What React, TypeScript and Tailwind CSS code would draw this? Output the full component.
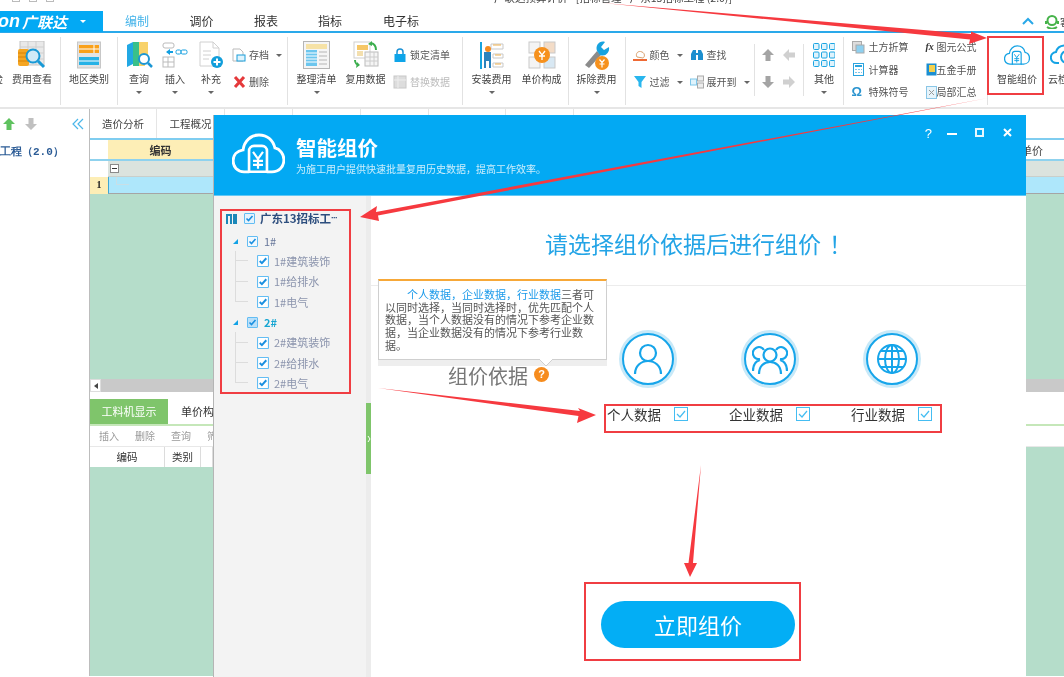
import React from "react";

const Svg = ({ w, h, children }: { w: number; h: number; children: React.ReactNode }) => (
  <svg width={w} height={h} viewBox={`0 0 ${w} ${h}`} fill="none" className="shrink-0">
    {children}
  </svg>
);

const FeeIcon = () => (
  <Svg w={28} h={28}>
    <rect x="2" y="0" width="24" height="24" fill="#e9e9e9" stroke="#c4c4c4" />
    <path d="M2 6h24M2 12h24M2 18h24M10 0v24M18 0v24" stroke="#cfcfcf" />
    <rect x="0" y="8" width="11" height="17" rx="2" fill="#f5a623" />
    <path d="M0 12h11M0 16h11M0 20h11" stroke="#d98207" />
    <circle cx="15" cy="15" r="6.5" fill="#cfeaf7" stroke="#1899d6" strokeWidth="2" />
    <path d="M20 20l6 6" stroke="#1899d6" strokeWidth="3" />
  </Svg>
);
const RegionIcon = () => (
  <Svg w={24} h={28}>
    <rect x="0.5" y="1" width="23" height="26" fill="#e3e3e3" stroke="#c7c7c7" />
    <rect x="2" y="4" width="20" height="8" fill="#f9a11b" />
    <rect x="2" y="16" width="20" height="8" fill="#27b2e6" />
    <path d="M17 4v8M2 8h20M2 20h20" stroke="#fff" />
  </Svg>
);
const QueryIcon = () => (
  <Svg w={27} h={28}>
    <path d="M1 4l6-3v22l-6 3z" fill="#22a8e4" />
    <path d="M7 1h6v24H7z" fill="#39c08a" />
    <path d="M13 1h9v15l-4 3 1 6h-6z" fill="#f8d26a" />
    <circle cx="18" cy="18" r="5" fill="#fff" stroke="#1b96d4" strokeWidth="2" />
    <path d="M22 22l4 4" stroke="#1b96d4" strokeWidth="2.5" />
  </Svg>
);
const InsertIcon = () => (
  <Svg w={26} h={28}>
    <rect x="1" y="2" width="11" height="5" rx="2" stroke="#bbb" />
    <rect x="1" y="16" width="11" height="10" stroke="#bbb" />
    <path d="M1 21h11M6 16v10" stroke="#bbb" />
    <path d="M5 11h6" stroke="#139fe0" strokeWidth="2" />
    <path d="M8 8v6l-4-3z" fill="#139fe0" />
    <rect x="14" y="9" width="5" height="4" rx="1.5" stroke="#139fe0" />
    <rect x="19" y="9" width="6" height="4" rx="1.5" stroke="#139fe0" />
  </Svg>
);
const AddIcon = () => (
  <Svg w={24} h={28}>
    <path d="M1 1h13l6 6v18H1z" fill="#fff" stroke="#d0d0d0" />
    <path d="M14 1v6h6M4 10h8M4 14h8M4 18h6" stroke="#d0d0d0" />
    <circle cx="18" cy="21" r="6" fill="#119edb" />
    <path d="M14.5 21h7M18 17.5v7" stroke="#fff" strokeWidth="2" />
  </Svg>
);
const TableIcon = () => (
  <Svg w={27} h={28}>
    <rect x="0.5" y="0.5" width="26" height="27" fill="#f5f5f5" stroke="#b5b5b5" strokeWidth="1" />
    <rect x="3" y="3" width="21" height="5" fill="#f6e2a6" />
    <rect x="3" y="9" width="11" height="16" fill="#6cc6ee" />
    <path d="M3 12h11M3 15h11M3 18h11M3 21h11" stroke="#fff" />
    <path d="M16 11h8M16 15h8M16 19h8M16 23h8" stroke="#d5d5d5" strokeWidth="2" />
  </Svg>
);
const ReuseIcon = () => (
  <Svg w={26} h={28}>
    <rect x="1" y="1" width="16" height="16" fill="#fff" stroke="#cfcfcf" />
    <rect x="4" y="4" width="11" height="5" fill="#f6c766" />
    <rect x="4" y="10" width="6" height="5" fill="#f3dfae" />
    <rect x="12" y="11" width="13" height="14" fill="#f5f5f5" stroke="#bbb" />
    <path d="M12 16h13M12 20h13M17 11v14M21 11v14" stroke="#ccc" />
    <path d="M18 2c4 1 5 4 5 7" stroke="#3cae4e" strokeWidth="2" />
    <path d="M19 0l-4 3 4 2zM3 27l4-3-3-3z" fill="#3cae4e" />
    <path d="M2 19c0 3 2 5 4 5" stroke="#3cae4e" strokeWidth="2" />
  </Svg>
);
const InstallIcon = () => (
  <Svg w={25} h={28}>
    <path d="M2 1v27" stroke="#17a4df" strokeWidth="2" />
    <path d="M12 3h12v5H12zM14 13h10v4H14zM14 22h10v4H14z" stroke="#c9c9c9" />
    <path d="M14 4h8M16 14h6M16 23h6" stroke="#f0b04a" />
    <circle cx="9" cy="8" r="3" fill="#f58a1f" />
    <rect x="5" y="11" width="7" height="9" fill="#2c83bd" />
    <path d="M6 20v7M11 20v7" stroke="#2c83bd" strokeWidth="2" />
  </Svg>
);
const UnitIcon = () => (
  <Svg w={28} h={28}>
    <rect x="1" y="1" width="11" height="11" stroke="#c9c9c9" fill="#f4f4f4" />
    <rect x="16" y="1" width="11" height="11" stroke="#c9c9c9" fill="#f3dcc7" />
    <rect x="1" y="16" width="11" height="11" stroke="#c9c9c9" fill="#f4f4f4" />
    <rect x="16" y="16" width="11" height="11" stroke="#c9c9c9" fill="#d8e8f3" />
    <circle cx="14" cy="14" r="8" fill="#f6911d" />
    <path d="M11 10l3 4 3-4M14 14v5M11 15h6" stroke="#fff" strokeWidth="1.3" />
  </Svg>
);
const WrenchIcon = () => (
  <Svg w={28} h={30}>
    <path d="M2 25L14 11l4 4L6 28z" fill="#8b8b8b" />
    <path d="M14 11c-2-6 3-11 8-9l-4 5 3 3 5-3c1 6-4 10-9 8z" fill="#17a3df" />
    <circle cx="19" cy="23" r="7" fill="#f6911d" />
    <path d="M16.5 19.5l2.5 3 2.500-3M19 22.500v5M16.500 24h5" stroke="#fff" strokeWidth="1.2" />
  </Svg>
);
const GridIcon = () => (
  <Svg w={22} h={24}>
    {[0, 8.5, 17].map((y) =>
      [0, 8, 16].map((x) => (
        <rect key={`${x}-${y}`} x={x + 0.5} y={y + 0.5} width="5.500" height="6" rx="1" stroke="#1ba5e3" fill="#dff3fc" />
      ))
    )}
  </Svg>
);
const CloudY = ({ s = 26, c = "#15a3e4", sw = 2 }: { s?: number; c?: string; sw?: number }) => (
  <svg width={s} height={s * 0.77} viewBox="0 0 53 41" fill="none" className="shrink-0">
    <path
      d="M17 39H12C5 39 1 34 1 28c0-6 4-10 10-11C12 8 19 2 27 2c8 0 14 5 16 13 5 1 9 6 9 12 0 7-5 12-12 12h-5"
      stroke={c}
      strokeWidth={sw * 1.3}
      strokeLinecap="round"
    />
    <path d="M17 39V18c0-3 2-5 5-5h8c3 0 5 2 5 5v21z" stroke={c} strokeWidth={sw * 1.2} />
    <path d="M21 19l5 7 5-7M26 26v10M21 28h10M21 32h10" stroke={c} strokeWidth={sw} />
  </svg>
);

const Caret = () => <span className="block w-0 h-0 border-x-[3px] border-x-transparent border-t-[3px] border-t-[#666]" />;

const Large = ({ w, label, icon, caret, cls = "" }: { w: number; label: string; icon: React.ReactNode; caret?: boolean; cls?: string }) => (
  <div className={`flex flex-col items-center shrink-0 pt-[4px] ${cls}`} style={{ width: w }}>
    <div className="h-[28px] flex items-center justify-center">{icon}</div>
    <div className="mt-[3px] text-[10px] leading-[14px] text-[#444] whitespace-nowrap">{label}</div>
    {caret && <div className="mt-[5px]"><Caret /></div>}
  </div>
);

const Small = ({ icon, label, caret, faded, w }: { icon: React.ReactNode; label: string; caret?: boolean; faded?: boolean; w: number }) => (
  <div className="flex items-center h-[14px]" style={{ width: w }}>
    <div className="w-[17px] flex justify-start shrink-0">{icon}</div>
    <span className={`text-[10px] leading-[14px] whitespace-nowrap ${faded ? "text-[#bbb]" : "text-[#555]"}`}>{label}</span>
    {caret && <span className="ml-[7px]"><Caret /></span>}
  </div>
);

const Group = ({ w, children }: { w: number; children: React.ReactNode }) => (
  <div className="relative flex shrink-0 h-[68px] mt-[4px] border-r border-[#e2e2e2]" style={{ width: w }}>
    {children}
  </div>
);

const Col2 = ({ children, cls = "" }: { children: React.ReactNode; cls?: string }) => (
  <div className={`flex flex-col gap-[13px] pt-[11px] shrink-0 ${cls}`}>{children}</div>
);

const Arrow = ({ d, c }: { d: string; c: string }) => (
  <Svg w={14} h={14}>
    <path d={d} fill={c} />
  </Svg>
);
const UP = "M7 1l6 6H9.500v6h-5V7H1z";
const DOWN = "M7 13l6-6H9.500V1h-5v6H1z";
const LEFT = "M1 7l6-6v3.500h6v5H7V13z";
const RIGHT = "M13 7L7 1v3.500H1v5h6V13z";

const Check = ({ size = 11, fill = "#fff", border = "#63bdf3", check = "#1a8fe0", sw = 1.6 }: { size?: number; fill?: string; border?: string; check?: string; sw?: number }) => (
  <svg width={size} height={size} viewBox="0 0 11 11" className="shrink-0">
    <rect x="0.500" y="0.500" width="10" height="10" rx="0.500" fill={fill} stroke={border} />
    <path d="M2.500 5.500l2 2 4-4.500" fill="none" stroke={check} strokeWidth={sw} />
  </svg>
);

const Child = ({ label, last }: { label: string; last?: boolean }) => (
  <div className="flex h-[20.300px] ml-[21px]">
    <div className="w-[13px] shrink-0 flex flex-col">
      <div className="h-1/2 border-l border-b border-[#dcdcdc]" />
      <div className={`h-1/2 ${last ? "" : "border-l border-[#dcdcdc]"}`} />
    </div>
    <div className="ml-[9px] flex items-center">
      <Check size={12} sw={1.8} />
      <span className="ml-[5px] text-[11px] text-[#8b94ad] whitespace-nowrap">{label}</span>
    </div>
  </div>
);

const Tri = () => <span className="block w-0 h-0 border-l-[5px] border-l-transparent border-b-[5px] border-b-[#12a2e6]" />;

const Ring = ({ children }: { children: React.ReactNode }) => (
  <div className="w-[58px] h-[58px] rounded-full bg-[#c8e9f8] flex items-center justify-center">
    <div className="w-[52px] h-[52px] rounded-full bg-white border-2 border-[#16a5ea] flex items-center justify-center">{children}</div>
  </div>
);

const Data = ({ label }: { label: string }) => (
  <div className="w-[122px] flex items-center shrink-0">
    <span className="w-[54px] text-[13.500px] leading-[20px] text-[#333] whitespace-nowrap">{label}</span>
    <span className="ml-[13px] flex">
      <svg width="14" height="14" viewBox="0 0 14 14">
        <rect x="0.500" y="0.500" width="13" height="13" fill="#fff" stroke="#45bdf2" />
        <path d="M3 7l3 3 5-6" fill="none" stroke="#45bdf2" strokeWidth="1.200" />
      </svg>
    </span>
  </div>
);

function Row3({ icon, label, x }: { icon: React.ReactNode; label: string; x?: boolean }) {
  return (
    <div className="flex items-center h-[14px]">
      <div className={`${x ? "w-[11px]" : "w-[17px]"} shrink-0 flex`}>{icon}</div>
      <span className="text-[10px] leading-[14px] text-[#555] whitespace-nowrap">{label}</span>
    </div>
  );
}

export default function App() {
  return (
    <div className="relative w-[1064px] h-[677px] overflow-hidden bg-white blur-[0.35px]" style={{ fontFamily: '"Noto Sans CJK SC","Liberation Sans",sans-serif' }}>
      {/* title strip */}
      <div className="h-[11px] overflow-hidden flex">
        <div className="flex gap-[9px] pl-[12px] -mt-[6px]">
          <span className="block w-[8px] h-[8px] border border-[#bbb]" />
          <span className="block w-[8px] h-[8px] border border-[#bbb]" />
          <span className="block w-[8px] h-[8px] border border-[#bbb]" />
        </div>
        <div className="ml-[440px] -mt-[9px] text-[10.500px] leading-[14px] text-[#444] whitespace-nowrap">广联达预算计价 - [招标管理 - 广东13招标工程 (2.0)]</div>
      </div>

      {/* tab strip */}
      <div className="flex h-[22px] border-b-2 border-[#2aa9ea]">
        <div className="w-[103px] h-[21px] bg-[#03a9f4] flex items-center text-white overflow-hidden shrink-0">
          <span className="-ml-[6px] w-[26px] shrink-0 text-right italic font-bold text-[18px] leading-[21px] font-['Liberation_Sans']">on</span>
          <span className="ml-[2px] italic font-bold text-[15px] leading-[21px] whitespace-nowrap">广联达</span>
          <span className="ml-[13px] w-0 h-0 border-x-[3.500px] border-x-transparent border-t-[3.500px] border-t-white" />
        </div>
        <div className="ml-[2px] w-[64px] text-center text-[12px] leading-[20px] text-[#45b4ea]">编制</div>
        <div className="w-[65px] text-center text-[12px] leading-[20px] text-[#333]">调价</div>
        <div className="w-[64px] text-center text-[12px] leading-[20px] text-[#333]">报表</div>
        <div className="w-[64px] text-center text-[12px] leading-[20px] text-[#333]">指标</div>
        <div className="w-[78px] text-center text-[12px] leading-[20px] text-[#333]">电子标</div>
        <div className="ml-auto flex items-center">
          <svg width="12" height="8" viewBox="0 0 12 8"><path d="M1 7l5-5 5 5" fill="none" stroke="#29a8e8" strokeWidth="2" /></svg>
          <svg className="ml-[11px]" width="14" height="15" viewBox="0 0 14 15" fill="none">
            <circle cx="7" cy="6.500" r="4.500" stroke="#46b34a" strokeWidth="2" />
            <path d="M1 7v3M13 7v3M2 13c3 2 7 2 10 0" stroke="#46b34a" strokeWidth="2" />
          </svg>
          <span className="ml-[1px] w-[4px] overflow-hidden text-[10px] text-[#444]">客</span>
        </div>
      </div>

      {/* ribbon */}
      <div className="flex h-[76px] border-b-2 border-[#e6e6e6] bg-white overflow-hidden">
        <Group w={61}>
          <div className="w-[12px] flex justify-start pt-[35px] text-[10px] leading-[14px] text-[#444] shrink-0">
            <span className="block w-[3px] h-[14px] overflow-hidden" dir="rtl">检</span>
          </div>
          <Large w={40} label="费用查看" icon={<FeeIcon />} />
        </Group>
        <Group w={57}>
          <Large w={56} label="地区类别" icon={<RegionIcon />} />
        </Group>
        <Group w={170}>
          <Large w={36} cls="ml-[3px]" label="查询" icon={<QueryIcon />} caret />
          <Large w={36} label="插入" icon={<InsertIcon />} caret />
          <Large w={36} label="补充" icon={<AddIcon />} caret />
          <Col2 cls="ml-[3px]">
            <Small w={56} label="存档" caret icon={<Svg w={14} h={14}><path d="M1 1h7l3 3v9H1z" fill="#fff" stroke="#bbb" /><rect x="5" y="7" width="8" height="6" fill="#dff3fc" stroke="#1a9ed9" /></Svg>} />
            <Small w={56} label="删除" icon={<Svg w={14} h={14}><path d="M3 2l9 10M12 2L3 12" stroke="#e5393b" strokeWidth="3" /></Svg>} />
          </Col2>
        </Group>
        <Group w={174.500}>
          <Large w={49} cls="ml-[4px]" label="整理清单" icon={<TableIcon />} caret />
          <Large w={49} label="复用数据" icon={<ReuseIcon />} />
          <Col2 cls="ml-[3px]">
            <Small w={60} label="锁定清单" icon={<Svg w={14} h={14}><path d="M4 7V4c0-4 6-4 6 0v3" stroke="#1b92d6" strokeWidth="1.500" /><rect x="1.500" y="6" width="11" height="8" fill="#0ea5e9" /></Svg>} />
            <Small w={60} faded label="替换数据" icon={<Svg w={14} h={14}><rect x="1" y="1" width="12" height="12" fill="#ddd" stroke="#c8c8c8" /><path d="M1 5h12M5 1v12" stroke="#eee" /></Svg>} />
          </Col2>
        </Group>
        <Group w={106}>
          <Large w={50} cls="ml-[4px]" label="安装费用" icon={<InstallIcon />} caret />
          <Large w={50} label="单价构成" icon={<UnitIcon />} />
        </Group>
        <Group w={57}>
          <Large w={56} label="拆除费用" icon={<WrenchIcon />} caret />
        </Group>
        <Group w={218}>
          <div className="ml-[7px] shrink-0">
            <Col2>
              <Small w={57} label="颜色" caret icon={<Svg w={14} h={14}><path d="M4 9c-2-3 1-7 5-5 3 1 3 5 1 6z" fill="#fff" stroke="#d9a26f" /><rect x="0" y="11" width="14" height="2" fill="#ef6a34" /></Svg>} />
              <Small w={57} label="过滤" caret icon={<Svg w={14} h={14}><path d="M1 1h12L8.500 7v6l-3-2V7z" fill="#29b6ee" /></Svg>} />
            </Col2>
          </div>
          <Col2>
            <Small w={64} label="查找" icon={<Svg w={14} h={14}><path d="M1 6l2-4h3v3h2V2h3l2 4v6H8V7H6v5H1z" fill="#1c8fcf" /></Svg>} />
            <Small w={64} label="展开到" caret icon={<Svg w={14} h={14}><rect x="0.500" y="4" width="6" height="6" fill="#dff3fc" stroke="#7fc7ea" /><rect x="7.500" y="1" width="6" height="5" fill="#eee" stroke="#aaa" /><rect x="7.500" y="8" width="6" height="5" fill="#eee" stroke="#aaa" /></Svg>} />
          </Col2>
          <div className="w-px h-[52px] mt-[7px] bg-[#e2e2e2] shrink-0" />
          <Col2 cls="ml-[6px]">
            <div className="flex gap-[7px]"><Arrow d={UP} c="#a4a4a4" /><Arrow d={LEFT} c="#d0d0d0" /></div>
            <div className="flex gap-[7px]"><Arrow d={DOWN} c="#a4a4a4" /><Arrow d={RIGHT} c="#d0d0d0" /></div>
          </Col2>
          <div className="ml-[7px] w-px h-[52px] mt-[7px] bg-[#e2e2e2] shrink-0" />
          <Large w={41} label="其他" icon={<GridIcon />} caret />
        </Group>
        <Group w={144.500}>
          <div className="ml-[8px] pt-[3px] w-[74px] shrink-0 flex flex-col gap-[8.500px]">
            <Row3 label="土方折算" icon={<Svg w={13} h={13}><rect x="0.500" y="0.500" width="9" height="9" fill="#ddd" stroke="#aaa" /><rect x="4" y="4" width="8" height="8" fill="#8ed0f0" stroke="#aaa" /></Svg>} />
            <Row3 label="计算器" icon={<Svg w={13} h={13}><rect x="1.500" y="0.500" width="10" height="12" fill="#fff" stroke="#2aa4df" /><path d="M3 3h7" stroke="#2aa4df" strokeWidth="2" /><path d="M3 6.500h7M3 9.500h7" stroke="#7cc7ea" strokeDasharray="2 1" /></Svg>} />
            <Row3 label="特殊符号" icon={<span className="text-[13px] leading-[14px] font-bold text-[#2b94cf] font-['Liberation_Sans']">Ω</span>} />
          </div>
          <div className="pt-[3px] flex flex-col gap-[8.500px]">
            <Row3 x label="图元公式" icon={<span className="text-[10px] leading-[14px] font-bold italic text-[#333] font-['Liberation_Serif']">fx</span>} />
            <Row3 x label="五金手册" icon={<Svg w={11} h={13}><rect x="0.500" y="0.500" width="10" height="12" fill="#1b8ed1" /><rect x="3" y="2" width="6" height="7" fill="#f3d04e" /></Svg>} />
            <Row3 x label="局部汇总" icon={<Svg w={11} h={13}><rect x="0.500" y="0.500" width="10" height="12" fill="#e7f4fb" stroke="#8ac6e6" /><path d="M3 4l5 5M8 4l-5 5" stroke="#999" /></Svg>} />
          </div>
        </Group>
        <div className="flex shrink-0 mt-[4px]">
          <Large w={54} cls="ml-[2px]" label="智能组价" icon={<CloudY />} />
          <div className="ml-[4px] w-[28px] overflow-hidden shrink-0 pt-[4px]">
            <div className="h-[28px] flex items-center ml-[2px]">
              <Svg w={26} h={24}><path d="M9 20H7C-1 20-1 10 6 9 8 1 20 0 23 8" stroke="#15a3e4" strokeWidth="2" /><circle cx="17" cy="14" r="6" stroke="#15a3e4" strokeWidth="2" /></Svg>
            </div>
            <div className="mt-[3px] text-[10px] leading-[14px] text-[#444] whitespace-nowrap">云检</div>
          </div>
        </div>
      </div>

      {/* workspace */}
      <div className="flex h-[567px]">
        <div className="w-[90px] shrink-0 border-r border-[#bdbdbd] bg-white">
          <div className="flex items-center h-[28px] pl-[2px] pt-[2px]">
            <Arrow d={UP} c="#5fc25f" />
            <span className="ml-[8px]"><Arrow d={DOWN} c="#c0c0c0" /></span>
            <svg className="ml-[34px]" width="12" height="12" viewBox="0 0 12 12" fill="none"><path d="M6 1L1 6l5 5M11 1L6 6l5 5" stroke="#4bb7ea" strokeWidth="1.200" /></svg>
          </div>
          <div className="mt-[8px] text-[11px] leading-[14px] font-bold text-[#2c5c96] whitespace-nowrap font-['Liberation_Mono']">工程（2.0）</div>
        </div>

        <div className="flex-1 flex flex-col min-w-0 bg-white">
          {/* tabs */}
          <div className="flex h-[31px] border-b-2 border-[#7fcdf0] shrink-0">
            <div className="w-[67px] pt-[6px] text-center text-[10.500px] leading-[18px] text-[#444] border-r border-[#e5e5e5]">造价分析</div>
            <div className="w-[68px] pt-[6px] text-center text-[10.500px] leading-[18px] text-[#444] border-r border-[#e5e5e5]">工程概况</div>
            <div className="w-[68px] border-r border-[#e5e5e5]" />
            <div className="w-[68px] border-r border-[#e5e5e5]" />
            <div className="w-[68px] border-r border-[#e5e5e5]" />
            <div className="w-[77px] border-r border-[#e5e5e5]" />
            <div className="w-[68px] border-r border-[#e5e5e5]" />
          </div>
          {/* table head */}
          <div className="flex h-[21px] shrink-0 border-b-2 border-[#8fd2ee]">
            <div className="w-[18px] shrink-0 bg-white" />
            <div className="w-[105px] shrink-0 bg-[#fdeeb6] text-center text-[11px] leading-[20px] font-bold text-[#333]">编码</div>
            <div className="flex-1" />
            <div className="w-[43px] shrink-0 text-[11px] leading-[20px] text-[#444]">单价</div>
          </div>
          <div className="flex h-[16px] shrink-0">
            <div className="w-[18px] shrink-0 bg-white" />
            <div className="flex-1 bg-[#dbe3de] flex items-center pl-[2px] border-b border-[#c9cfcb]">
              <span className="block w-[9px] h-[9px] bg-white border border-[#8a8a8a] relative">
                <span className="absolute left-[1px] right-[1px] top-[3px] h-px bg-[#333]" />
              </span>
            </div>
          </div>
          <div className="flex h-[17px] shrink-0">
            <div className="w-[18px] shrink-0 bg-[#fdeeb6] text-center text-[10px] leading-[16px] font-bold text-[#222] font-['Liberation_Serif']">1</div>
            <div className="flex-1 bg-[#aee7fb] border-b border-[#a5a5a5] border-l border-l-[#3da7d6] relative">
              <span className="absolute left-[7px] top-0 w-[13px] h-[8px] border-l border-b border-[#c9dfe6]" />
            </div>
          </div>
          <div className="h-[185px] bg-[#b5ddca] shrink-0" />
          <div className="h-[13px] bg-[#c9c9c9] shrink-0 flex">
            <div className="w-[11px] bg-white border border-[#ddd] flex items-center justify-center">
              <span className="w-0 h-0 border-y-[3.500px] border-y-transparent border-r-[4px] border-r-[#444]" />
            </div>
          </div>
          <div className="h-[7px] shrink-0 bg-white" />
          <div className="h-[27px] shrink-0 flex border-b-2 border-[#c5e7b9]">
            <div className="w-[78px] bg-[#7fc56b] text-center text-white text-[11px] leading-[25px]">工料机显示</div>
            <div className="w-[60px] pl-[13px] text-[11px] leading-[25px] text-[#333] whitespace-nowrap">单价构成</div>
          </div>
          <div className="h-[20px] shrink-0 flex gap-[16px] pl-[9px] text-[10px] leading-[19px] text-[#999]">
            <span>插入</span>
            <span>删除</span>
            <span>查询</span>
            <span>筛选</span>
          </div>
          <div className="h-[21px] shrink-0 flex text-[10.500px] leading-[20px] text-[#333] border-t border-[#e8e8e8]">
            <div className="w-[75px] text-center border-r border-[#dcdcdc]">编码</div>
            <div className="w-[36px] text-center border-r border-[#dcdcdc]">类别</div>
            <div className="w-[12px] border-r border-[#dcdcdc]" />
            <div className="flex-1 bg-[#b5ddca]" />
          </div>
          <div className="flex-1 bg-[#b5ddca]" />
        </div>
      </div>

      {/* dialog */}
      <div className="absolute left-[213px] top-[115px] w-[813px] h-[562px] flex flex-col bg-white border-l border-[#b5b5b5]">
        <div className="relative h-[81px] shrink-0 bg-[#03a9f3] border-b border-[#63c8f5] flex">
          <div className="ml-[18px] mt-[18px]"><CloudY s={53} c="#fff" sw={2.200} /></div>
          <div className="ml-[11px] mt-[17px] text-white">
            <div className="text-[20.500px] leading-[30px] font-bold whitespace-nowrap">智能组价</div>
            <div className="text-[10px] leading-[14px] text-[#cdeefc] whitespace-nowrap">为施工用户提供快速批量复用历史数据，提高工作效率。</div>
          </div>
          <div className="ml-auto mt-[12px] mr-[14px] flex items-start text-white">
            <span className="text-[13px] leading-[12px] font-['Liberation_Sans'] mt-[1px]">?</span>
            <span className="block ml-[15px] mt-[6px] w-[10px] h-[2px] bg-white" />
            <span className="block ml-[18px] w-[9px] h-[9px] mt-[1px] border-2 border-[#e6f6fd]" />
            <svg className="ml-[19px] mt-[1px]" width="9" height="9" viewBox="0 0 9 9"><path d="M1 1l7 7M8 1L1 8" stroke="#fff" strokeWidth="2" /></svg>
          </div>
        </div>

        <div className="flex-1 flex min-h-0 relative">
          {/* left tree */}
          <div className="relative w-[157px] shrink-0 bg-[#f3f3f3] pt-[12px]">
            <div className="flex items-center h-[20px] pl-[12px]">
              <svg width="11" height="11" viewBox="0 0 11 11" className="shrink-0"><path d="M0 1h6v10H4V3H2v8H0zM7 1h4v10H7z" fill="#1a87b8" /></svg>
              <span className="ml-[7px] flex"><Check fill="#e5f3fc" /></span>
              <span className="ml-[5px] text-[11.500px] leading-[20px] font-bold text-[#2d4e7e] whitespace-nowrap">广东13招标工</span>
              <span className="text-[9px] leading-[20px] font-bold tracking-[-1px] text-[#2d4e7e] font-['Liberation_Sans'] whitespace-nowrap">···</span>
            </div>
            <div className="flex items-center h-[20.300px] mt-[3px] pl-[19px]">
              <Tri />
              <span className="ml-[9px] flex"><Check fill="#f2f9fe" /></span>
              <span className="ml-[6px] text-[11px] text-[#67779a]">1#</span>
            </div>
            <Child label="1#建筑装饰" />
            <Child label="1#给排水" />
            <Child label="1#电气" last />
            <div className="flex items-center h-[20.300px] pl-[19px]">
              <Tri />
              <span className="ml-[9px] flex"><Check fill="#b9e0fa" /></span>
              <span className="ml-[6px] text-[11px] font-bold text-[#18a6d2]">2#</span>
            </div>
            <Child label="2#建筑装饰" />
            <Child label="2#给排水" />
            <Child label="2#电气" last />
            <div className="absolute right-0 top-0 bottom-0 w-[5px] bg-[#ececec]">
              <div className="mt-[207px] h-[71px] bg-[#7fc56b] flex items-center justify-center">
                <svg width="4" height="6" viewBox="0 0 4 6"><path d="M1 0l2 3-2 3" fill="none" stroke="#fff" /></svg>
              </div>
            </div>
          </div>

          {/* right */}
          <div className="flex-1 min-w-0 flex flex-col">
            <div className="h-[90px] shrink-0 border-b border-[#ececec] pt-[32px] pl-[174px] text-[23px] leading-[30px] text-[#23a4e6] whitespace-nowrap">请选择组价依据后进行组价<span className="ml-[8px]">！</span></div>
            <div className="flex mt-[44px]">
              <div className="w-[216px] shrink-0 pl-[77px] pt-[32px] flex items-center h-[59px]">
                <span className="text-[20px] leading-[26px] text-[#777] whitespace-nowrap">组价依据</span>
                <span className="ml-[6px] -mt-[3px] w-[15px] h-[15px] rounded-full bg-[#f68c1e] text-white text-[11px] leading-[15px] text-center font-bold font-['Liberation_Sans']">?</span>
              </div>
              <div className="w-[122px] flex justify-center shrink-0">
                <Ring>
                  <svg width="30" height="34" viewBox="0 0 30 34" fill="none" stroke="#16a5ea" strokeWidth="2.200"><circle cx="15" cy="11" r="8" /><path d="M2 32c0-8 6-13 13-13s13 5 13 13" /></svg>
                </Ring>
              </div>
              <div className="w-[122px] flex justify-center shrink-0">
                <Ring>
                  <svg width="36" height="32" viewBox="0 0 36 32" fill="none" stroke="#16a5ea" strokeWidth="2.200"><circle cx="18" cy="12" r="6.500" /><path d="M7 31c0-8 5-12 11-12s11 4 11 12M12 7a6 6 0 1 0-4 9M24 7a6 6 0 1 1 4 9M1 28c0-6 3-10 7-11M35 28c0-6-3-10-7-11" /></svg>
                </Ring>
              </div>
              <div className="w-[122px] flex justify-center shrink-0">
                <Ring>
                  <svg width="32" height="32" viewBox="0 0 32 32" fill="none" stroke="#16a5ea" strokeWidth="2"><circle cx="16" cy="16" r="14" /><ellipse cx="16" cy="16" rx="7" ry="14" /><path d="M16 2v28M2 16h28M5 8h22M5 24h22" /></svg>
                </Ring>
              </div>
            </div>
            <div className="flex mt-[11px] ml-[236px] h-[28px]">
              <Data label="个人数据" />
              <Data label="企业数据" />
              <Data label="行业数据" />
            </div>
            <button className="mt-[173px] ml-[230px] w-[194px] h-[47px] rounded-full bg-[#03aef5] text-white text-[22px] leading-[47px] text-center">立即组价</button>
          </div>

          {/* tooltip */}
          <div className="absolute left-[164px] top-[83px] w-[229px]">
            <div className="h-[81px] bg-white border border-[#cfcfcf] border-t-2 border-t-[#f7a838] pl-[6px] pr-[6px] pt-[7px] text-[11px] leading-[12.700px] text-[#555]">
              <p className="indent-[22px]"><span className="text-[#1b9aea]">个人数据，企业数据，行业数据</span>三者可以同时选择，当同时选择时，优先匹配个人数据，当个人数据没有的情况下参考企业数据，当企业数据没有的情况下参考行业数据。</p>
            </div>
            <div className="relative h-[6px] bg-[#eeeeee]">
              <svg className="absolute left-[161px] -top-[1px]" width="14" height="8" viewBox="0 0 14 8"><path d="M0 0l7 7 7-7z" fill="#fff" /><path d="M0 0l7 7 7-7" fill="none" stroke="#cfcfcf" /></svg>
            </div>
          </div>
        </div>
      </div>

      {/* annotations */}
      <div className="absolute left-[220px] top-[209px] w-[131px] h-[185px] border-[2px] border-[#f03d42]" />
      <div className="absolute left-[604px] top-[404px] w-[338px] h-[29px] border-[2px] border-[#f03d42]" />
      <div className="absolute left-[584px] top-[582px] w-[217px] h-[79px] border-[2px] border-[#f03d42]" />
      <div className="absolute left-[987px] top-[36px] w-[57px] h-[59px] border-[2px] border-[#f03d42]" />

      <svg className="absolute inset-0 pointer-events-none" width="1064" height="677" viewBox="0 0 1064 677">
        <g fill="#f6393f">
          <path d="M603 3L971 34L971 31.500L987 38L969 44L970 39.500Z" />
          <path d="M988 98L376 212L377 206L360 217L379 221L378 215.500Z" />
          <path d="M378 388L580 411L578 408L596 415L577 423L578.500 416Z" />
          <path d="M701 465L693 563L697 563L690 577L684 563L688.500 563Z" />
        </g>
      </svg>
    </div>
  );
}
